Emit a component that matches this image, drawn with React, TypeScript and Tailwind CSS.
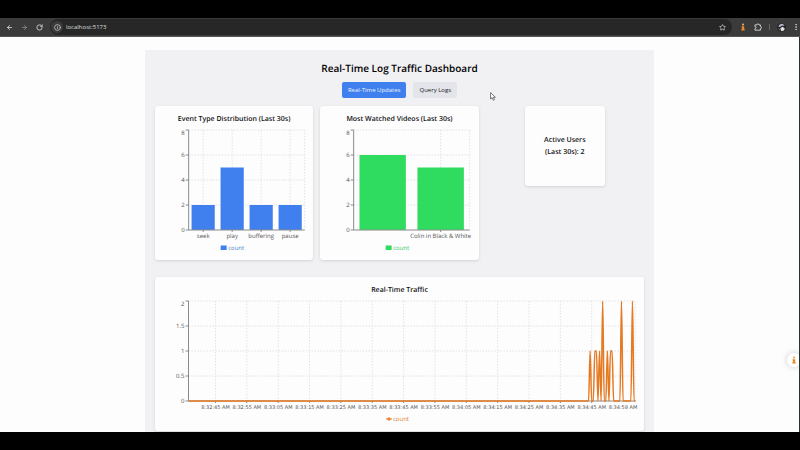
import type { ReactNode } from "react";
import { ArrowLeft, ArrowRight, Info, RotateCw, Star, EllipsisVertical } from "lucide-react";

const PLOT_TOP = 4;
const PLOT_HEIGHT = 100;
const PLOT_BOTTOM = PLOT_TOP + PLOT_HEIGHT;
const AXIS_X = 33.5;

type Bar = { name: string; count: number; hideLabel?: boolean };

const eventTypes: Bar[] = [
  { name: "seek", count: 2 },
  { name: "play", count: 5 },
  { name: "buffering", count: 2 },
  { name: "pause", count: 2 },
];

const videos: Bar[] = [
  { name: "", count: 6, hideLabel: true },
  { name: "Colin in Black & White", count: 5 },
];

const times = [
  "8:32:45 AM", "8:32:55 AM", "8:33:05 AM", "8:33:15 AM", "8:33:25 AM", "8:33:35 AM", "8:33:45 AM",
  "8:33:55 AM", "8:34:05 AM", "8:34:15 AM", "8:34:25 AM", "8:34:35 AM", "8:34:45 AM",
];

// Events per sample, starting two samples before 8:34:45 AM.
const traffic = [
  0, 1, 0, 0, 1, 1, 0, 1, 0, 2, 0, 0, 1, 0, 1, 1, 0, 0, 0, 0, 0, 2, 0, 0, 0, 0, 0, 0, 2, 0, 0,
];

function YAxis({ ticks, right }: { ticks: number[]; right: number }) {
  const max = ticks[ticks.length - 1];
  return (
    <g>
      {ticks.map((t) => {
        const y = PLOT_BOTTOM - (t / max) * PLOT_HEIGHT;
        return (
          <g key={t}>
            {t > 0 && <line x1={AXIS_X} x2={right} y1={y} y2={y} stroke="#e2e2e6" strokeDasharray="1.5 1.5" />}
            <line x1={AXIS_X - 3} x2={AXIS_X} y1={y} y2={y} stroke="#8a8a8a" />
            <text x={AXIS_X - 4} y={t === max ? y + 5 : y + 2} textAnchor="end" fill="#555">
              {t}
            </text>
          </g>
        );
      })}
      <line x1={AXIS_X} x2={AXIS_X} y1={PLOT_TOP} y2={PLOT_BOTTOM} stroke="#8a8a8a" />
    </g>
  );
}

function BarPlot({ data, color, labelColor, label }: { data: Bar[]; color: string; labelColor: string; label: string }) {
  const width = 116;
  const right = AXIS_X + width;
  const band = width / data.length;
  return (
    <svg viewBox="0 0 158 128" className="block h-32 w-full text-[6px] [text-rendering:geometricPrecision]" role="img" aria-label={label}>
      <YAxis ticks={[0, 2, 4, 6, 8]} right={right} />
      <line x1={right} x2={right} y1={PLOT_TOP} y2={PLOT_BOTTOM} stroke="#e2e2e6" strokeDasharray="1.5 1.5" />
      {data.map((d, i) => {
        const cx = AXIS_X + band * (i + 0.5);
        const h = (d.count / 8) * PLOT_HEIGHT;
        return (
          <g key={i}>
            {!d.hideLabel && (
              <line x1={cx} x2={cx} y1={PLOT_TOP} y2={PLOT_BOTTOM} stroke="#e2e2e6" strokeDasharray="1.5 1.5" />
            )}
            <rect x={cx - band * 0.4} y={PLOT_BOTTOM - h} width={band * 0.8} height={h} fill={color} />
            {!d.hideLabel && (
              <>
                <line x1={cx} x2={cx} y1={PLOT_BOTTOM} y2={PLOT_BOTTOM + 2} stroke="#8a8a8a" />
                <text x={cx} y={PLOT_BOTTOM + 8} textAnchor="middle" fill="#555">
                  {d.name}
                </text>
              </>
            )}
          </g>
        );
      })}
      <line x1={AXIS_X} x2={right} y1={PLOT_BOTTOM} y2={PLOT_BOTTOM} stroke="#8a8a8a" />
      <rect x={65.5} y={119.5} width={6} height={4.5} fill={color} />
      <text x={73} y={124} fill={labelColor}>
        count
      </text>
    </svg>
  );
}

function TrafficPlot() {
  const right = 480;
  const first = 60.5;
  const gap = 31.35;
  const step = gap / 20;
  const start = first + gap * 12 - step * 2;
  const yOf = (v: number) => PLOT_BOTTOM - (v / 2) * PLOT_HEIGHT;
  let path = `M${AXIS_X},${yOf(0)}L${start},${yOf(0)}`;
  for (let i = 1; i < traffic.length; i++) {
    const x0 = start + step * (i - 1);
    const x1 = start + step * i;
    const y0 = yOf(traffic[i - 1]);
    const y1 = yOf(traffic[i]);
    path += `C${x0 + step / 3},${y0},${x1 - step / 3},${y1},${x1},${y1}`;
  }
  return (
    <svg viewBox="0 0 489 128" className="block h-32 w-full text-[6px] [text-rendering:geometricPrecision]" role="img" aria-label="Real-time traffic">
      <YAxis ticks={[0, 0.5, 1, 1.5, 2]} right={right} />
      {times.map((t, i) => {
        const x = first + gap * i;
        return (
          <g key={t}>
            <line x1={x} x2={x} y1={PLOT_TOP} y2={PLOT_BOTTOM} stroke="#e2e2e6" strokeDasharray="1.5 1.5" />
            <line x1={x} x2={x} y1={PLOT_BOTTOM} y2={PLOT_BOTTOM + 2} stroke="#8a8a8a" />
            <text x={x} y={PLOT_BOTTOM + 8} textAnchor="middle" fill="#555" className="font-['DejaVu_Sans',sans-serif] text-[5px]">
              {t}
            </text>
          </g>
        );
      })}
      <line x1={right} x2={right} y1={PLOT_TOP} y2={PLOT_BOTTOM + 2} stroke="#e2e2e6" strokeDasharray="1.5 1.5" />
      <text x={468} y={PLOT_BOTTOM + 8} textAnchor="middle" fill="#555" className="font-['DejaVu_Sans',sans-serif] text-[5px]">
        8:34:59 AM
      </text>
      <line x1={AXIS_X} x2={right} y1={PLOT_BOTTOM} y2={PLOT_BOTTOM} stroke="#8a8a8a" />
      <path d={path} fill="none" stroke="#e67a22" strokeWidth={1.5} />
      <line x1={231} x2={237} y1={122} y2={122} stroke="#e67a22" />
      <circle cx={234} cy={122} r={1.2} fill="#f2ac72" stroke="#e67a22" />
      <text x={238} y={124} fill="#d9822f">
        count
      </text>
    </svg>
  );
}

function Card({ title, children }: { title: string; children: ReactNode }) {
  return (
    <section className="rounded-[3px] bg-[#fdfdfe] pt-2 pb-1.5 shadow-[0_1px_3px_rgba(0,0,0,0.13)]">
      <h2 className="text-center text-[7px] leading-3 font-semibold">{title}</h2>
      {children}
    </section>
  );
}

function PuzzleMark() {
  return (
    <svg viewBox="0 0 10 10" className="block size-2" fill="none" stroke="currentColor" strokeWidth="1.2" strokeLinejoin="round" aria-hidden="true">
      <path d="M1.2 2.4H3.6A1.3 1.3 0 0 1 6.2 2.4H8V4.4A1.3 1.3 0 0 1 8 7V9H1.2V7A1.3 1.3 0 0 0 1.2 4.4Z" />
    </svg>
  );
}

function BrowserBar() {
  return (
    <header className="flex h-[19px] shrink-0 items-center border-b border-[#555] bg-[#3b3b3b] pl-1.5 text-[#d0d0d0]">
      <nav className="flex items-center gap-2">
        <button aria-label="Back"><ArrowLeft className="size-[7px]" strokeWidth={3} /></button>
        <button aria-label="Forward" className="text-[#858585]"><ArrowRight className="size-[7px]" strokeWidth={3} /></button>
        <button aria-label="Reload"><RotateCw className="size-[7px]" strokeWidth={3} /></button>
      </nav>
      <div className="ml-[7px] flex h-4 flex-1 items-center rounded-full bg-[#272727] pr-1.5 pl-px">
        <button aria-label="Site information" className="flex size-3 items-center justify-center rounded-full bg-[#3b3b3b]">
          <Info className="size-[7px]" strokeWidth={2.5} />
        </button>
        <input
          aria-label="Address"
          defaultValue="localhost:5173"
          className="ml-[3px] min-w-0 flex-1 bg-transparent text-[6px] leading-3 text-[#dedede] outline-none"
        />
        <button aria-label="Bookmark"><Star className="size-[7px]" strokeWidth={2.5} /></button>
      </div>
      <div className="flex items-center pl-2">
        <button aria-label="Extension" className="w-1.5">
          <InfoMark />
        </button>
        <button aria-label="Extensions" className="ml-2"><PuzzleMark /></button>
        <span className="ml-[7px] h-1.5 w-px bg-[#666]" />
        <button aria-label="Profile" className="ml-[7px]">
          <svg viewBox="0 0 9 9" className="size-[9px]">
            <circle cx="4.5" cy="4.5" r="4.3" fill="#202126" />
            <path d="M1.2 3.4Q2.6.3 6 .9L7.6 3 5.2 2.4 3 4Z" fill="#b9bcc4" />
            <path d="M3.2 5.4 5.4 3.8 7.8 5.2 7 7.4 4.4 8.2Z" fill="#e8dddb" />
            <path d="M1 5.2 2.6 6 3 8Z" fill="#8f9199" />
          </svg>
        </button>
        <button aria-label="Menu" className="ml-1.5"><EllipsisVertical className="size-2" strokeWidth={2.5} /></button>
      </div>
    </header>
  );
}

function InfoMark() {
  return (
    <svg viewBox="0 0 6 8" className="mx-auto block h-2 w-1.5" aria-hidden="true">
      <circle cx="3" cy="1.6" r="1.1" fill="#f0a050" />
      <path d="M1.6 3.3H4.2V6.3H4.8V7.5H1.3V6.3H1.9V4.4H1.6Z" fill="#ea8a2c" />
    </svg>
  );
}

export default function App() {
  return (
    <div className="flex h-screen flex-col overflow-hidden bg-black py-[18px] font-['Open_Sans','Noto_Sans',sans-serif] text-[#111]">
      <BrowserBar />
      <main className="relative min-h-0 flex-1 overflow-hidden border-r border-[#23372f] bg-[#fdfdfe] pt-[13px]">
        <div className="mx-auto min-h-full w-full max-w-[509px] bg-[#f1f0f3] px-2.5 pt-2.5 [text-rendering:geometricPrecision]">
          <h1 className="text-center text-[10px] leading-4 font-semibold text-black">Real-Time Log Traffic Dashboard</h1>
          <div className="mt-1.5 flex justify-center gap-[7px] text-[6px] leading-4">
            <button className="rounded-[2px] bg-[#4080ee] px-1.5 text-[#eef4ff]">Real-Time Updates</button>
            <button className="rounded-[2px] bg-[#e4e5ea] px-1.5 text-[#222]">Query Logs</button>
          </div>
          <div className="mt-2 grid grid-cols-3 items-start gap-[7px]">
            <Card title="Event Type Distribution (Last 30s)">
              <BarPlot data={eventTypes} color="#4080ee" labelColor="#4a86c8" label="Event type distribution" />
            </Card>
            <Card title="Most Watched Videos (Last 30s)">
              <BarPlot data={videos} color="#30dc60" labelColor="#35c865" label="Most watched videos" />
            </Card>
            <section className="mx-auto flex aspect-square w-20 items-center justify-center rounded-[3px] bg-[#fdfdfe] px-3 pt-0.5 shadow-[0_1px_3px_rgba(0,0,0,0.13)]">
              <h2 className="text-center text-[7px] leading-3 font-semibold">Active Users (Last 30s): 2</h2>
            </section>
          </div>
          <div className="mt-[17px]">
            <Card title="Real-Time Traffic">
              <TrafficPlot />
            </Card>
          </div>
        </div>
        <button
          aria-label="Open extension panel"
          className="absolute top-[316px] -right-0.5 flex h-3.5 w-3.5 items-center justify-center rounded-full bg-white shadow-[0_0_6px_rgba(0,0,0,0.2)]"
        >
          <InfoMark />
        </button>
        <svg viewBox="0 0 6 9" className="absolute top-[55px] left-[490px] h-[9px] w-1.5" aria-hidden="true">
          <path d="M.6.6V7L2.2 5.6 3.3 8.2 4.4 7.7 3.4 5.3H5.4Z" fill="#fff" stroke="#444" strokeWidth=".7" />
        </svg>
      </main>
    </div>
  );
}
